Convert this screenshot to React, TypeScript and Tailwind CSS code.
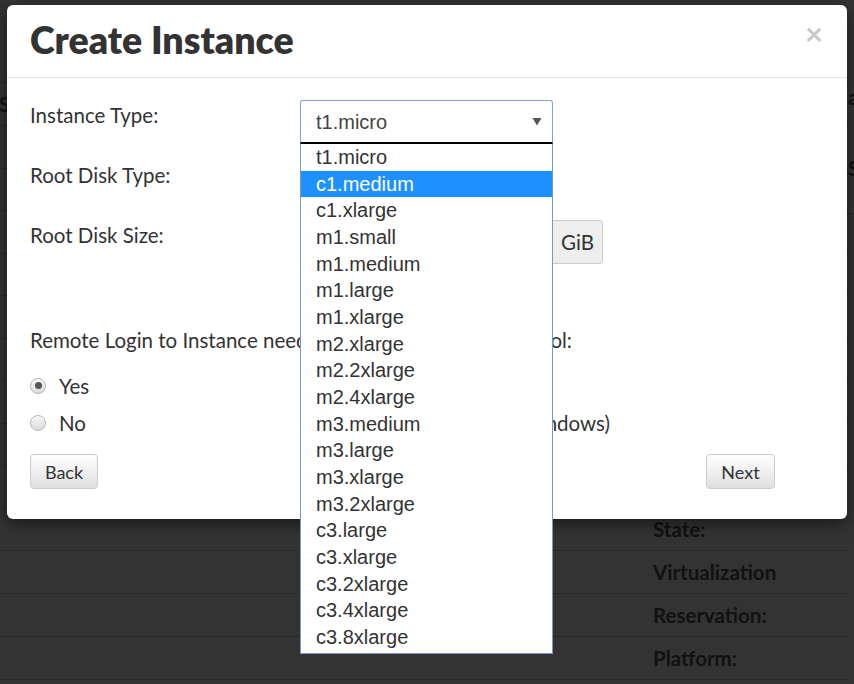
import React from "react";

const items = [
  "t1.micro",
  "c1.medium",
  "c1.xlarge",
  "m1.small",
  "m1.medium",
  "m1.large",
  "m1.xlarge",
  "m2.xlarge",
  "m2.2xlarge",
  "m2.4xlarge",
  "m3.medium",
  "m3.large",
  "m3.xlarge",
  "m3.2xlarge",
  "c3.large",
  "c3.xlarge",
  "c3.2xlarge",
  "c3.4xlarge",
  "c3.8xlarge",
];

function Radio({ checked }: { checked?: boolean }) {
  return (
    <span className="flex h-[16px] w-[16px] items-center justify-center rounded-full border border-[#b5b5b5] bg-gradient-to-b from-[#f4f4f4] to-[#dcdcdc] shadow-[inset_0_1px_1px_rgba(255,255,255,0.8)]">
      {checked && <span className="h-[7px] w-[7px] rounded-full bg-[#555]" />}
    </span>
  );
}

function BgRow({ label, h = "h-[43px]" }: { label?: string; h?: string }) {
  return (
    <div className={`${h} grid grid-cols-[653px_1fr] items-center border-b border-[#2a2a2a]`}>
      <span />
      <span className="text-[20.5px] font-bold text-[#111]">{label}</span>
    </div>
  );
}

export default function App() {
  return (
    <div
      className="relative h-[684px] w-[854px] overflow-hidden bg-[#333]"
      style={{ fontFamily: "Lato, 'Open Sans', sans-serif" }}
    >
      {/* background page (dimmed) */}
      <div className="flex">
        <div className="flex w-[848px] flex-col">
          <div className="h-[83px] border-b border-[#2a2a2a]" />
          <div className="flex h-[43px] items-center border-b border-[#2a2a2a] text-[20.5px] font-bold text-[#111]">
            <span className="ml-[-1px]">S</span>
          </div>
          <div className="h-[43px] border-b border-[#2a2a2a]" />
          <div className="h-[42px] border-b border-[#2a2a2a]" />
          <div className="h-[43px] border-b border-[#2a2a2a]" />
          <div className="h-[42px] border-b border-[#2a2a2a]" />
          <div className="h-[43px] border-b border-[#2a2a2a]" />
          <div className="h-[42px] border-b border-[#2a2a2a]" />
          <div className="h-[43px] border-b border-[#2a2a2a]" />
          <div className="h-[42px] border-b border-[#2a2a2a]" />
          <div className="h-[42px] border-b border-[#2a2a2a]" />
          <BgRow label="State:" />
          <BgRow label="Virtualization" />
          <BgRow label="Reservation:" />
          <BgRow label="Platform:" />
        </div>
        <div className="flex w-[6px] flex-col text-[20.5px] font-bold text-[#111]">
          <div className="h-[84px]" />
          <div className="h-[26px] leading-[26px]">a</div>
          <div className="h-[45px]" />
          <div className="h-[26px] leading-[26px]">S</div>
          <div className="h-[33px] border-b border-[#2a2a2a]" />
        </div>
      </div>

      {/* modal */}
      <div className="absolute left-[7px] top-[5px] flex h-[514px] w-[840px] flex-col rounded-[6px] bg-white shadow-[0_5px_15px_rgba(0,0,0,0.5)]">
        <div className="flex h-[73px] items-start justify-between border-b border-[#e5e5e5] px-[23px] pt-[13px]">
          <h1 className="text-[37.5px] font-extrabold leading-[44px] text-[#333]">Create Instance</h1>
          <span className="mr-[1px] text-[31px] font-bold leading-[31px] text-[#c8c8c8]">×</span>
        </div>

        <div className="flex flex-1 flex-col px-[23px] pt-[22px] text-[20.5px] leading-[26px] text-[#333]">
          {/* Instance Type */}
          <div className="grid h-[60px] grid-cols-[270px_253px]">
            <span className="pt-[2px]">Instance Type:</span>
            <div className="relative h-[44px]" style={{ fontFamily: "'Liberation Sans', Arial, sans-serif" }}>
              <div className="flex h-[44px] items-center justify-between rounded-t-[3px] border-x border-t border-b-2 border-x-[#7ea3e2] border-t-[#7ea3e2] border-b-black pl-[15px] pr-[10px] text-[20px] text-[#444]">
                <span>t1.micro</span>
                <svg width="10" height="9" viewBox="0 0 10 9">
                  <path d="M0.5 1 L9.5 1 L5 8.5 Z" fill="#555" />
                </svg>
              </div>
              <ul className="absolute left-0 top-[44px] z-10 h-[510px] w-[253px] border-x border-b border-[#7896cf] bg-white text-[20px] text-[#333]">
                {items.map((it, i) => (
                  <li
                    key={it}
                    className={`h-[26.67px] pl-[15px] leading-[26.67px] ${i === 1 ? "bg-[#1e90ff] text-white" : ""}`}
                  >
                    {it}
                  </li>
                ))}
              </ul>
            </div>
          </div>

          {/* Root Disk Type */}
          <div className="grid h-[60px] grid-cols-[270px_253px]">
            <span className="pt-[2px]">Root Disk Type:</span>
            <div className="h-[44px] rounded-[4px] border border-[#ccc]" />
          </div>

          {/* Root Disk Size */}
          <div className="grid h-[60px] grid-cols-[270px_253px_auto] items-start">
            <span className="pt-[2px]">Root Disk Size:</span>
            <div className="h-[44px] rounded-l-[4px] border border-[#ccc]" />
            <span className="flex h-[44px] w-[50px] items-center justify-center rounded-r-[4px] border border-l-0 border-[#ccc] bg-[#eee] text-[#333]">
              GiB
            </span>
          </div>

          <div className="mt-[47px] flex w-[542px] justify-between whitespace-nowrap">
            <span>Remote Login to Instance needed, select</span>
            <span>protocol:</span>
          </div>

          <div className="mt-[14px] flex h-[37px] items-center gap-[13px]">
            <Radio checked />
            <span>Yes</span>
          </div>
          <div className="grid h-[37px] grid-cols-[270px_310px] items-center">
            <div className="flex items-center gap-[13px]">
              <Radio />
              <span>No</span>
            </div>
            <span className="whitespace-nowrap text-right">RDP (Windows)</span>
          </div>

          <div className="mt-[13px] flex items-center justify-between pr-[49px]">
            <button className="h-[35px] w-[68px] rounded-[4px] border border-[#ccc] bg-gradient-to-b from-white to-[#e0e0e0] text-[18px] text-[#333]">
              Back
            </button>
            <button className="h-[35px] w-[69px] rounded-[4px] border border-[#ccc] bg-gradient-to-b from-white to-[#e0e0e0] text-[18px] text-[#333]">
              Next
            </button>
          </div>
        </div>
      </div>
    </div>
  );
}
